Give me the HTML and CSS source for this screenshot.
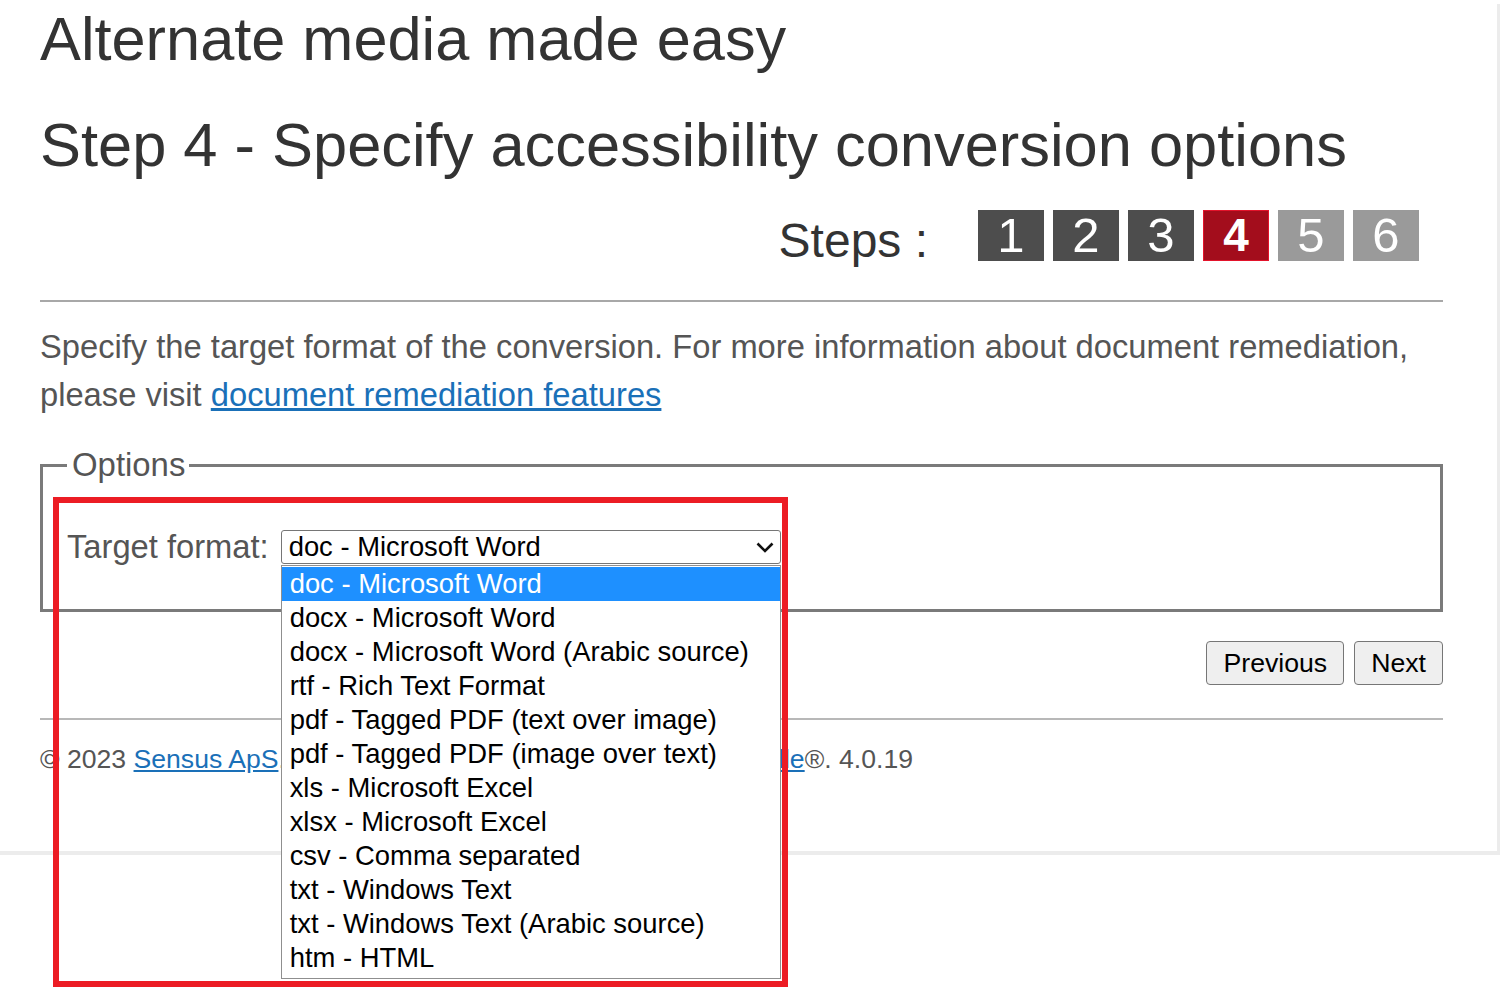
FILE: index.html
```html
<!DOCTYPE html>
<html lang="en">
<head>
<meta charset="utf-8">
<title>Alternate media made easy</title>
<link rel="stylesheet" href="styles.css">
</head>
<body>
<div class="page">
  <h1 class="title">Alternate media made easy</h1>
  <h2 class="step-title">Step 4 - Specify accessibility conversion options</h2>
  <div class="steps">
    <span class="steps-label">Steps :</span>
    <ol class="step-list">
      <li class="step done">1</li>
      <li class="step done">2</li>
      <li class="step done">3</li>
      <li class="step current">4</li>
      <li class="step todo">5</li>
      <li class="step todo">6</li>
    </ol>
  </div>
  <hr class="rule">
  <p class="intro">Specify the target format of the conversion. For more information about document remediation, please visit <a href="#" class="link">document remediation features</a></p>
  <fieldset class="options">
    <legend class="options-legend">Options</legend>
    <div class="field">
      <label class="field-label">Target format:</label>
      <div class="select-wrap">
        <div class="select">
          <span class="select-value">doc - Microsoft Word</span>
          <svg class="chevron" width="18" height="11" viewBox="0 0 18 11"><path d="M1.5 1.5 L9 9 L16.5 1.5" fill="none" stroke="#111" stroke-width="2.6"/></svg>
        </div>
        <ul class="listbox">
          <li class="option selected">doc - Microsoft Word</li>
          <li class="option">docx - Microsoft Word</li>
          <li class="option">docx - Microsoft Word (Arabic source)</li>
          <li class="option">rtf - Rich Text Format</li>
          <li class="option">pdf - Tagged PDF (text over image)</li>
          <li class="option">pdf - Tagged PDF (image over text)</li>
          <li class="option">xls - Microsoft Excel</li>
          <li class="option">xlsx - Microsoft Excel</li>
          <li class="option">csv - Comma separated</li>
          <li class="option">txt - Windows Text</li>
          <li class="option">txt - Windows Text (Arabic source)</li>
          <li class="option">htm - HTML</li>
        </ul>
      </div>
    </div>
  </fieldset>
  <div class="actions">
    <button class="btn" type="button">Previous</button>
    <button class="btn" type="button">Next</button>
  </div>
  <hr class="rule rule-light">
  <p class="footer">© 2023 <a href="#" class="link">Sensus ApS</a>. All rights reserved. Powered by <a href="#" class="link">RoboBraille</a>®. 4.0.19</p>
</div>
<div class="highlight"></div>
</body>
</html>
```
FILE: styles.css
```css
html, body {
  margin: 0;
  padding: 0;
  overflow: hidden;
  background: #fff;
}
body {
  position: relative;
  font-family: "Liberation Sans", Arial, sans-serif;
  height: 987px;
}
.page {
  width: 1500px;
  box-sizing: border-box;
  padding: 0 54px 72px 40px;
  border-right: 3px solid #ececec;
  border-bottom: 4px solid #ececec;
}
.title,
.step-title {
  font-size: 61.3px;
  line-height: 70px;
  font-weight: normal;
  color: #333;
  margin: 4px 0 0;
}
.step-title {
  font-size: 61.4px;
  margin-top: 36px;
}
.steps {
  display: flex;
  justify-content: flex-end;
  align-items: flex-start;
  margin: 30px 24px 0 0;
}
.steps-label {
  font-size: 48px;
  line-height: 62px;
  color: #333;
  margin-right: 50px;
}
.step-list {
  display: flex;
  gap: 9px;
  list-style: none;
  margin: 0;
  padding: 0;
}
.step {
  width: 66px;
  height: 51px;
  box-sizing: border-box;
  font-size: 49px;
  line-height: 51px;
  text-align: center;
  color: #fff;
  background: #4d4d4d;
}
.step.current {
  background: #a30d1c;
  border: 1px solid #e3132b;
  line-height: 49px;
  font-weight: bold;
  font-size: 46px;
}
.step.todo {
  background: #9a9a9a;
}
.rule {
  margin: 28px 0 0;
  border: 0;
  border-top: 2px solid #a8a8a8;
  height: 0;
}
.intro {
  margin: 21px 0 0;
  font-size: 32.7px;
  line-height: 48px;
  color: #555;
}
.link {
  color: #1a70b8;
  text-decoration: underline;
}
.options {
  margin: 28px 0 0;
  padding: 40px 24px 38px;
  border: 3px solid #7a7a7a;
  min-width: 0;
}
.options-legend {
  font-size: 32.9px;
  line-height: 36px;
  color: #555;
  padding: 0 4px 0 5px;
}
.field {
  display: flex;
  align-items: center;
  height: 48px;
}
.field-label {
  font-size: 32.7px;
  line-height: 48px;
  color: #555;
  margin-right: 12px;
}
.select-wrap {
  position: relative;
  width: 500px;
  height: 34px;
}
.select {
  box-sizing: border-box;
  width: 500px;
  height: 34px;
  border: 1px solid #767676;
  border-radius: 3px;
  padding: 0 6px 0 7px;
  display: flex;
  align-items: center;
  justify-content: space-between;
  font-size: 27.4px;
  line-height: 32px;
  color: #000;
  background: #fff;
}
.chevron {
  display: block;
}
.listbox {
  position: absolute;
  top: 35px;
  left: 0;
  width: 500px;
  box-sizing: border-box;
  margin: 0;
  padding: 1px 0 3px;
  list-style: none;
  background: #fff;
  border: 1px solid #8f8f8f;
  z-index: 2;
}
.option {
  height: 34px;
  line-height: 34px;
  padding-left: 8px;
  font-size: 27.4px;
  color: #000;
  white-space: nowrap;
}
.option.selected {
  background: #1e90ff;
  color: #fff;
}
.actions {
  display: flex;
  justify-content: flex-end;
  gap: 10px;
  margin-top: 29px;
}
.btn {
  height: 44px;
  padding: 0 16px;
  border: 1px solid #767676;
  border-radius: 4px;
  background: #efefef;
  color: #000;
  font-family: "Liberation Sans", Arial, sans-serif;
  font-size: 26.67px;
}
.rule-light {
  margin-top: 33px;
  border-top-color: #b8b8b8;
}
.footer {
  margin: 19px 0 0;
  font-size: 26.6px;
  line-height: 40px;
  color: #555;
  white-space: nowrap;
}
.highlight {
  position: absolute;
  top: 497px;
  left: 53px;
  width: 735px;
  height: 490px;
  box-sizing: border-box;
  border: 6px solid #ec1c24;
  z-index: 3;
  pointer-events: none;
}
```
